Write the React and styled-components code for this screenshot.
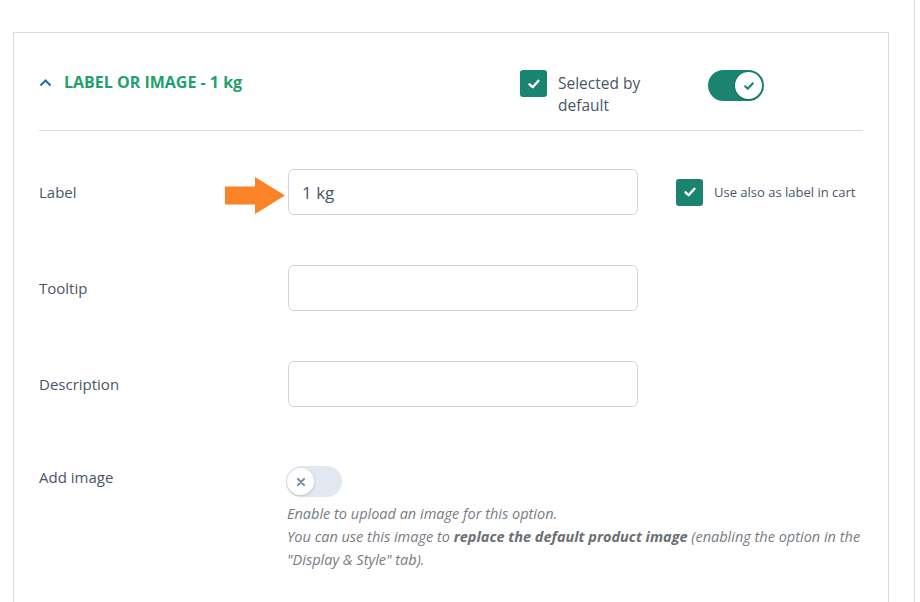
import React from 'react';
import styled, { createGlobalStyle } from 'styled-components';

const Global = createGlobalStyle`
    html, body {
        margin: 0;
        padding: 0;
        background: #ffffff;
        font-family: "Open Sans", "Noto Sans", sans-serif;
    }
    * { box-sizing: border-box; }
`;

const Page = styled.div`
    width: 915px;
    height: 602px;
    overflow: hidden;
    border-right: 1px solid #dcdcde;
    padding: 32px 25px 0 13px;
`;

const Card = styled.div`
    width: 876px;
    min-height: 600px;
    border: 1px solid #dcdcde;
    border-bottom: none;
    padding: 0 25px;
`;

const Header = styled.div`
    display: flex;
    align-items: flex-start;
    height: 98px;
    padding: 37px 99px 0 0;
    border-bottom: 1px solid #dcdcde;
`;

const Title = styled.div`
    flex: 1;
    display: flex;
    align-items: center;
    gap: 12px;
    height: 24px;
    font-size: 16px;
    font-weight: 700;
    color: #239f6e;
`;

const CheckOption = styled.label`
    display: flex;
    align-items: flex-start;
    gap: ${p => p.$gap || 11}px;
    width: ${p => (p.$width ? `${p.$width}px` : 'auto')};
    font-size: ${p => p.$size || 15.5}px;
    line-height: 22px;
    color: #4a5568;
`;

const OptionText = styled.span`
    max-width: ${p => (p.$max ? `${p.$max}px` : 'none')};
    padding-top: ${p => p.$top || 0}px;
`;

const Box = styled.span`
    flex: none;
    width: 27px;
    height: 27px;
    border-radius: 3px;
    background: #1a8470;
    display: flex;
    align-items: center;
    justify-content: center;
`;

const Toggle = styled.span`
    flex: none;
    position: relative;
    width: 56px;
    height: 31px;
    border-radius: 16px;
    background: ${p => (p.$on ? '#1a8470' : '#e2e8f0')};
    margin-top: ${p => p.$top || 0}px;
`;

const Knob = styled.span`
    position: absolute;
    top: 2px;
    left: ${p => (p.$on ? '27px' : '1px')};
    width: 27px;
    height: 27px;
    border-radius: 50%;
    background: #ffffff;
    box-shadow: 0 1px 3px rgba(0, 0, 0, 0.18);
    display: flex;
    align-items: center;
    justify-content: center;
`;

const Fields = styled.div`
    display: flex;
    flex-direction: column;
    gap: 50px;
    padding-top: 38px;
`;

const Row = styled.div`
    display: flex;
    align-items: ${p => (p.$top ? 'flex-start' : 'center')};
`;

const FieldLabel = styled.div`
    flex: none;
    width: 249px;
    min-height: ${p => p.$h || 46}px;
    display: flex;
    align-items: center;
    font-size: 15px;
    color: #4a5568;
`;

const InputWrap = styled.div`
    position: relative;
    flex: none;
`;

const Input = styled.div`
    width: 350px;
    height: 46px;
    border: 1px solid #cbd5e1;
    border-radius: 6px;
    padding: 0 13px;
    display: flex;
    align-items: center;
    font-size: 17px;
    color: #4a5568;
`;

const Arrow = styled.svg`
    position: absolute;
    left: -63px;
    top: 8px;
`;

const Aside = styled.div`
    margin-left: 38px;
`;

const Control = styled.div`
    display: flex;
    flex-direction: column;
    margin-left: -2px;
`;

const Help = styled.p`
    margin: 5px 0 0 1px;
    width: 580px;
    font-size: 14.5px;
    font-style: italic;
    line-height: 23px;
    color: #787c82;
    b { font-weight: 700; color: #6b6f75; }
`;

const Check = ({ color = '#fff', size = 14 }) => (
    <svg width={size} height={size} viewBox="0 0 14 14">
        <path d="M2.5 7.3 L5.6 10.2 L11.5 3.8" fill="none" stroke={color} strokeWidth="2.4" strokeLinecap="round" strokeLinejoin="round" />
    </svg>
);

const Cross = () => (
    <svg width="10" height="10" viewBox="0 0 10 10">
        <path d="M2 2 L8 8 M8 2 L2 8" stroke="#8391a7" strokeWidth="2.2" strokeLinecap="round" />
    </svg>
);

const Chevron = () => (
    <svg width="13" height="9" viewBox="0 0 13 9">
        <path d="M1.5 7.5 L6.5 2.5 L11.5 7.5" fill="none" stroke="#2271b1" strokeWidth="2.2" />
    </svg>
);

const App = () => {
    return (
        <Page>
            <Global />
            <Card>
                <Header>
                    <Title>
                        <Chevron />
                        LABEL OR IMAGE - 1 kg
                    </Title>
                    <CheckOption $width={188}>
                        <Box><Check /></Box>
                        <OptionText $max={100} $top={2}>Selected by default</OptionText>
                    </CheckOption>
                    <Toggle $on>
                        <Knob $on><Check color="#1a8470" size={12} /></Knob>
                    </Toggle>
                </Header>

                <Fields>
                    <Row>
                        <FieldLabel>Label</FieldLabel>
                        <InputWrap>
                            <Arrow width="61" height="37" viewBox="0 0 61 37">
                                <path d="M0 9.5 H30 V0 L60 18.5 L30 37 V27.5 H0 Z" fill="#fb8226" />
                            </Arrow>
                            <Input>1 kg</Input>
                        </InputWrap>
                        <Aside>
                            <CheckOption $size={13} $gap={11}>
                                <Box><Check /></Box>
                                <OptionText $top={2}>Use also as label in cart</OptionText>
                            </CheckOption>
                        </Aside>
                    </Row>
                    <Row>
                        <FieldLabel>Tooltip</FieldLabel>
                        <Input />
                    </Row>
                    <Row>
                        <FieldLabel>Description</FieldLabel>
                        <Input />
                    </Row>
                    <Row $top>
                        <FieldLabel $h={40}>Add image</FieldLabel>
                        <Control>
                            <Toggle $top={9}>
                                <Knob><Cross /></Knob>
                            </Toggle>
                            <Help>
                                Enable to upload an image for this option.<br />
                                You can use this image to <b>replace the default product image</b> (enabling the option in the "Display &amp; Style" tab).
                            </Help>
                        </Control>
                    </Row>
                </Fields>
            </Card>
        </Page>
    );
};

export default App;
